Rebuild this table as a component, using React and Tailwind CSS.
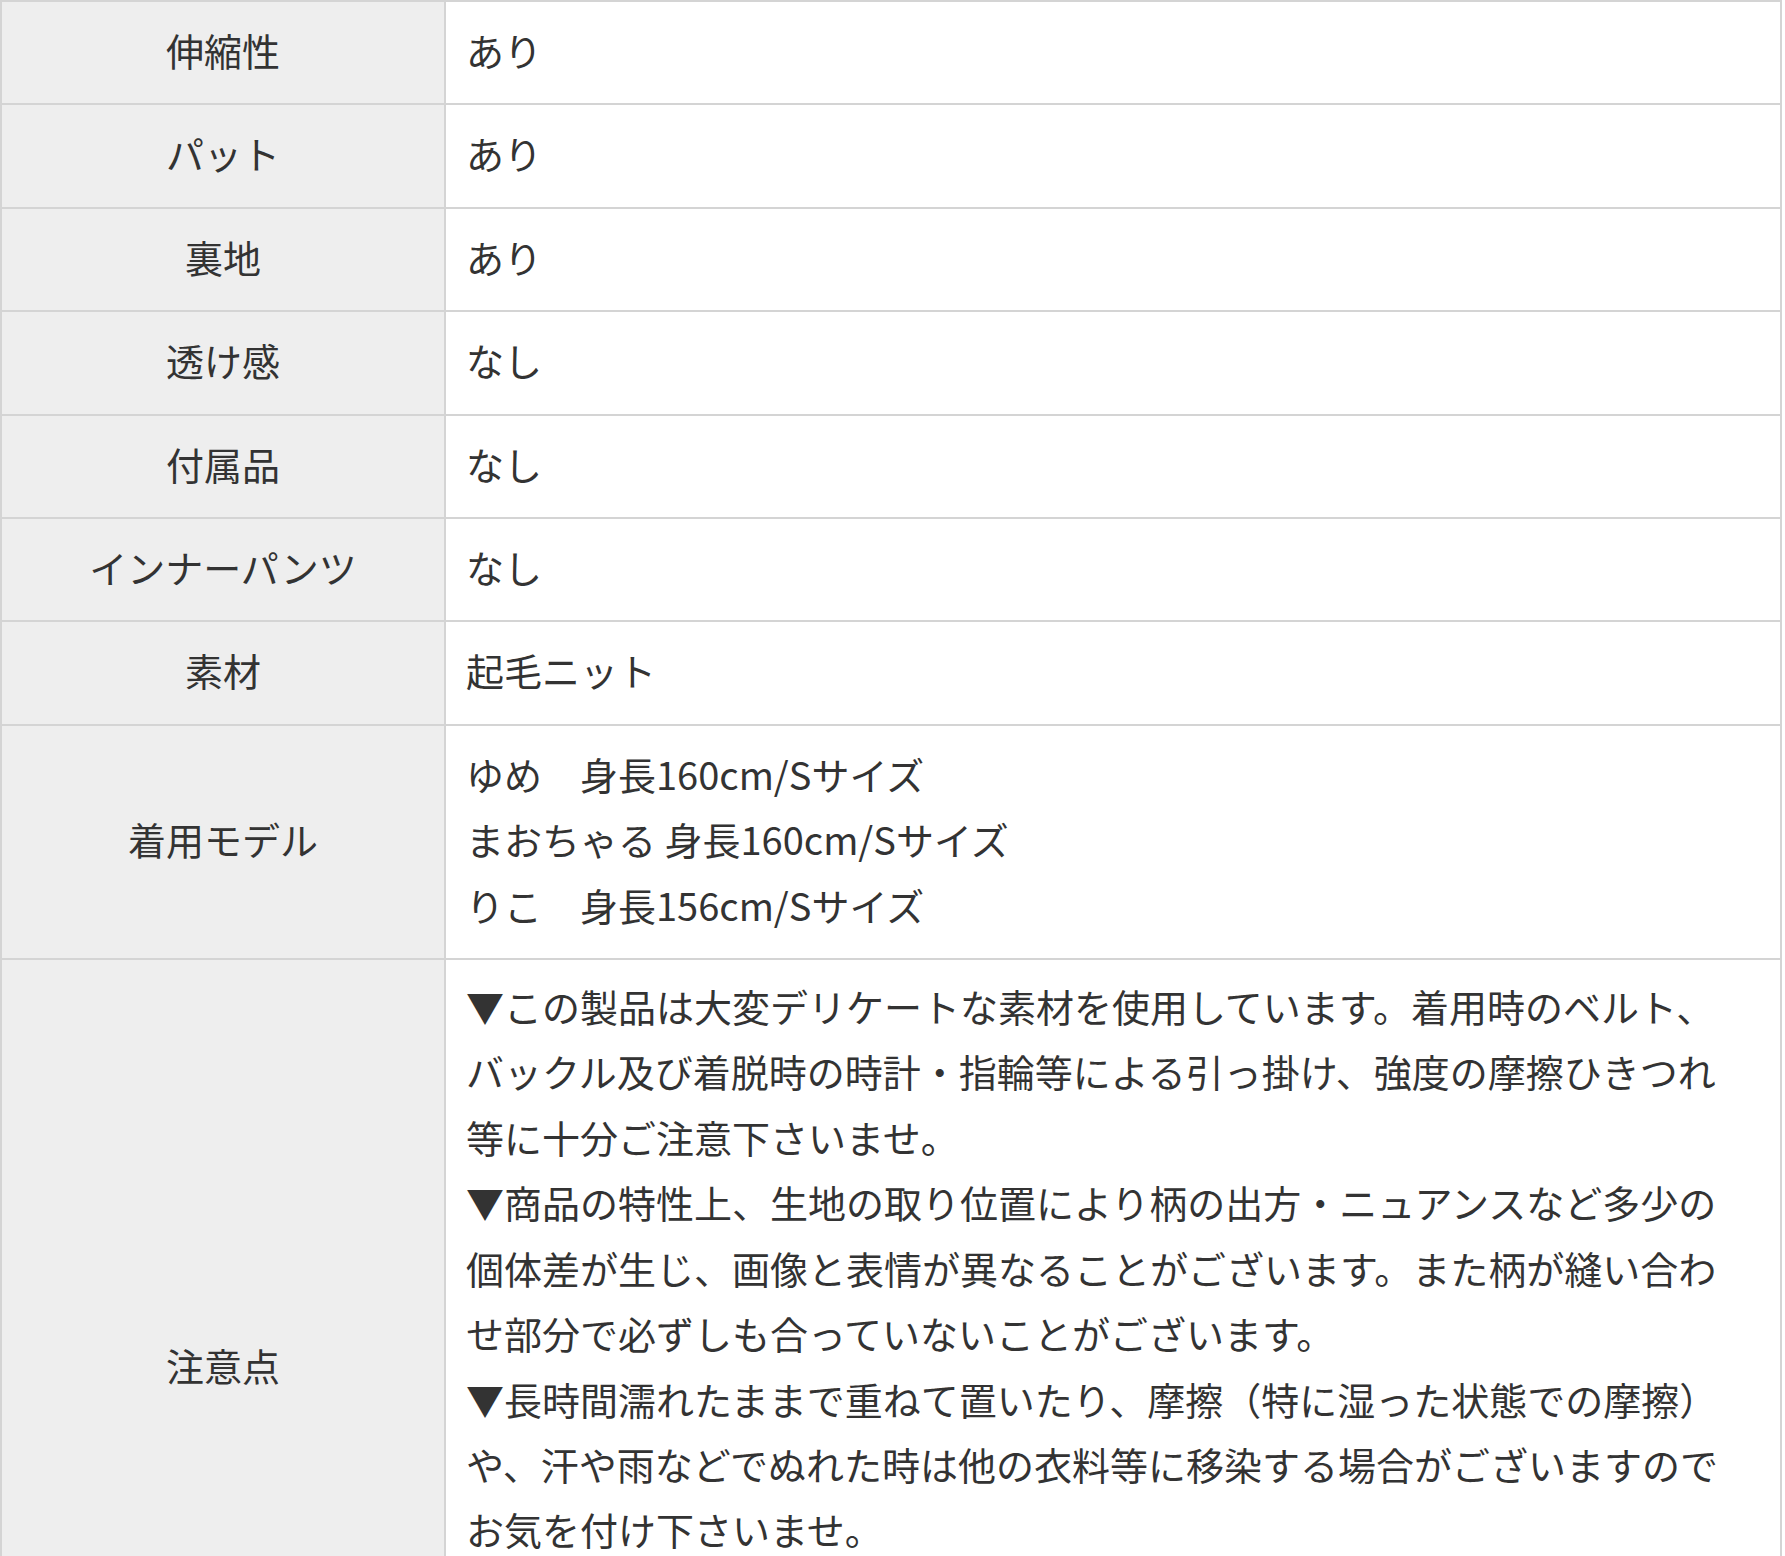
const rows = [
  { label: '伸縮性', value: ['あり'] },
  { label: 'パット', value: ['あり'] },
  { label: '裏地', value: ['あり'] },
  { label: '透け感', value: ['なし'] },
  { label: '付属品', value: ['なし'] },
  { label: 'インナーパンツ', value: ['なし'] },
  { label: '素材', value: ['起毛ニット'] },
  {
    label: '着用モデル',
    value: ['ゆめ　身長160cm/Sサイズ', 'まおちゃる 身長160cm/Sサイズ', 'りこ　身長156cm/Sサイズ'],
  },
]

const caution =
  '▼この製品は大変デリケートな素材を使用しています。着用時のベルト、バックル及び着脱時の時計・指輪等による引っ掛け、強度の摩擦ひきつれ等に十分ご注意下さいませ。\n▼商品の特性上、生地の取り位置により柄の出方・ニュアンスなど多少の個体差が生じ、画像と表情が異なることがございます。また柄が縫い合わせ部分で必ずしも合っていないことがございます。\n▼長時間濡れたままで重ねて置いたり、摩擦（特に湿った状態での摩擦）や、汗や雨などでぬれた時は他の衣料等に移染する場合がございますのでお気を付け下さいませ。'

function App() {
  return (
    <div className="min-h-screen bg-white text-[#333333] font-['Noto_Sans_CJK_JP',sans-serif]">
      <table className="w-[1782px] table-fixed border-collapse border-2 border-[#d4d4d4] text-[38px] leading-[65.4px]">
        <tbody>
          {rows.map((row) => (
            <tr key={row.label}>
              <th className="w-[444px] border-2 border-[#d4d4d4] bg-[#eeeeee] pt-[15px] pb-[21px] text-center font-normal">
                {row.label}
              </th>
              <td className="border-2 border-[#d4d4d4] bg-white pt-[15px] pb-[21px] pl-[20px] pr-[20px]">
                {row.value.map((line) => (
                  <div key={line} className="whitespace-pre">{line}</div>
                ))}
              </td>
            </tr>
          ))}
          {/* caution row runs past the bottom of the viewport */}
          <tr>
            <th className="w-[444px] border-2 border-[#d4d4d4] bg-[#eeeeee] text-center font-normal">
              注意点
            </th>
            <td className="border-2 border-[#d4d4d4] bg-white pt-[13px] pb-[208px] pl-[20px] pr-[47px] whitespace-pre-line">
              {caution}
            </td>
          </tr>
        </tbody>
      </table>
    </div>
  )
}

export default App
